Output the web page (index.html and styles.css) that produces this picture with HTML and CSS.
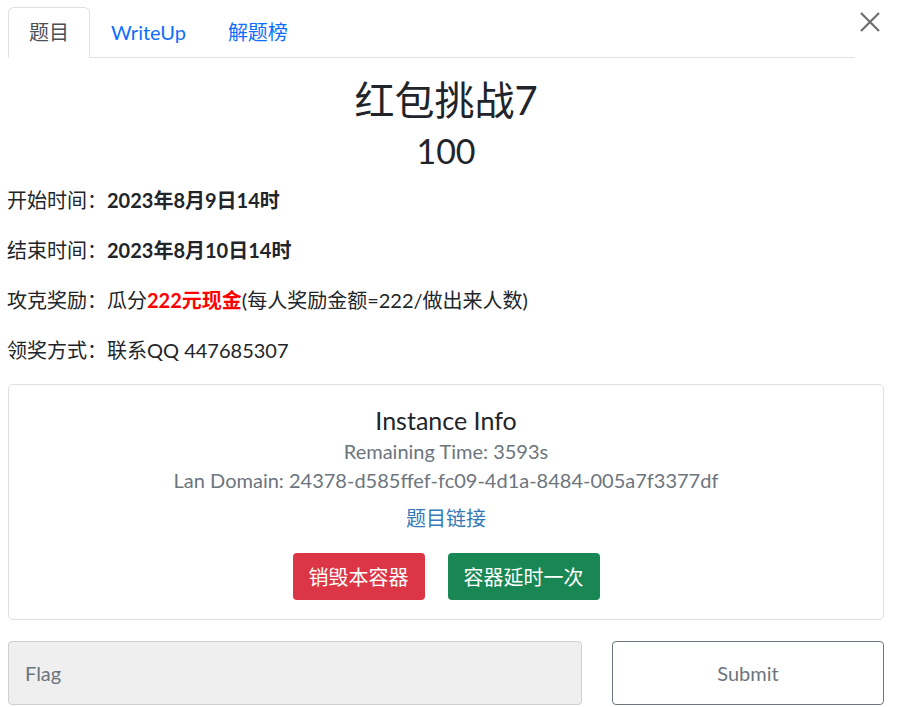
FILE: index.html
```html
<!DOCTYPE html>
<html lang="zh-CN">
<head>
<meta charset="utf-8">
<title>红包挑战7</title>
<link rel="stylesheet" href="styles.css">
</head>
<body>
<div class="page">
  <div class="header">
    <ul class="tabs">
      <li class="tab active">题目</li>
      <li class="tab">WriteUp</li>
      <li class="tab">解题榜</li>
    </ul>
    <button class="close" aria-label="Close">
      <svg width="22" height="22" viewBox="0 0 22 22"><path d="M2 2 L20 20 M20 2 L2 20" stroke="#6e6e6e" stroke-width="2.2" fill="none"/></svg>
    </button>
  </div>

  <h1 class="title">红包挑战7</h1>
  <h2 class="points">100</h2>

  <div class="desc">
    <p class="info">开始时间：<b>2023年8月9日14时</b></p>
    <p class="info">结束时间：<b>2023年8月10日14时</b></p>
    <p class="info">攻克奖励：瓜分<b class="red">222元现金</b>(每人奖励金额=222/做出来人数)</p>
    <p class="info">领奖方式：联系QQ 447685307</p>
  </div>

  <div class="card">
    <div class="card-title">Instance Info</div>
    <div class="muted">Remaining Time: 3593s</div>
    <div class="muted">Lan Domain: 24378-d585ffef-fc09-4d1a-8484-005a7f3377df</div>
    <a class="link" href="#">题目链接</a>
    <div class="actions">
      <button class="btn btn-danger">销毁本容器</button>
      <button class="btn btn-success">容器延时一次</button>
    </div>
  </div>

  <div class="submit-row">
    <input class="flag" type="text" placeholder="Flag">
    <button class="submit">Submit</button>
  </div>
</div>
</body>
</html>
```

FILE: styles.css
```css
* { box-sizing: border-box; }
html, body { margin: 0; padding: 0; background: #fff; }
body {
  font-family: Lato, "Noto Sans CJK SC", sans-serif;
  color: #212529;
  font-size: 20px;
}
.page {
  width: 876px;
  margin-left: 8px;
  padding-top: 7px;
}
.header {
  display: flex;
  align-items: flex-start;
}
.tabs {
  flex: 1;
  display: flex;
  list-style: none;
  margin: 0;
  padding: 0;
  border-bottom: 1px solid #dee2e6;
}
.tab {
  padding: 9px 20px 10px 20px;
  line-height: 30px;
  font-size: 20px;
  color: #0d6efd;
  border: 1px solid transparent;
  border-top-left-radius: 6px;
  border-top-right-radius: 6px;
  margin-bottom: -1px;
}
.tab.active {
  color: #495057;
  border-color: #dee2e6 #dee2e6 #fff;
  background: #fff;
}
.close {
  width: 29px;
  height: 29px;
  padding: 0;
  border: 0;
  background: transparent;
  display: flex;
  align-items: center;
  justify-content: center;
}
.title {
  margin: 19px 0 0;
  text-align: center;
  font-weight: 400;
  font-size: 40px;
  line-height: 47px;
}
.points {
  margin: 3px 0 10px;
  text-align: center;
  font-weight: 400;
  font-size: 34px;
  line-height: 48px;
}
.desc {
  margin-bottom: 19px;
}
.info {
  margin: 0 0 20px;
  line-height: 30px;
  font-size: 20px;
  margin-left: -1px;
}
.info:last-child { margin-bottom: 0; }
.info b { font-weight: 700; }
.info .red { color: #ff0000; }
.card {
  border: 1px solid #dfdfdf;
  border-radius: 5px;
  padding: 20px 16px 19px;
  text-align: center;
  display: flex;
  flex-direction: column;
  align-items: center;
}
.card-title {
  font-size: 25px;
  line-height: 30px;
  margin-bottom: 2px;
}
.muted {
  color: #6c757d;
  font-size: 20px;
  line-height: 29px;
}
.link {
  color: #337ab7;
  text-decoration: none;
  font-size: 20px;
  line-height: 29px;
  margin-top: 9px;
}
.actions {
  display: flex;
  gap: 23px;
  margin-top: 20px;
}
.btn {
  font-family: inherit;
  font-size: 20px;
  color: #fff;
  border: 0;
  border-radius: 4px;
  height: 47px;
  padding: 0 16px;
}
.btn-danger { background: #dc3545; }
.btn-success { background: #198754; }
.submit-row {
  display: flex;
  gap: 30px;
  margin-top: 21px;
}
.flag {
  flex: 1;
  height: 64px;
  background: #efefef;
  border: 1px solid #d0d0d4;
  border-radius: 4px;
  padding: 0 16px;
  font-family: inherit;
  font-size: 20px;
  color: #495057;
}
.flag::placeholder { color: #6c757d; }
.submit {
  width: 272px;
  height: 64px;
  background: #fff;
  border: 1px solid #6c757d;
  border-radius: 4px;
  font-family: inherit;
  font-size: 20px;
  color: #6c757d;
}
```
